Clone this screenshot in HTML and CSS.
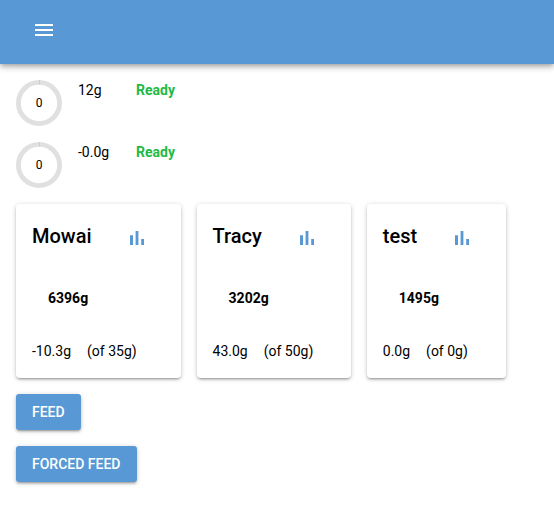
FILE: index.html
```html
<!DOCTYPE html>
<html lang="en">
<head>
<meta charset="utf-8">
<meta name="viewport" content="width=device-width, initial-scale=1">
<title>Feeder</title>
<link rel="stylesheet" href="styles.css">
</head>
<body>
<header class="toolbar">
  <button class="menu-button" type="button" aria-label="Menu">
    <svg class="icon" viewBox="0 0 24 24"><path d="M3 18h18v-2H3v2zm0-5h18v-2H3v2zm0-7v2h18V6H3z"/></svg>
  </button>
</header>
<main class="page">
  <section class="scale">
    <svg class="gauge" viewBox="0 0 46 46"><circle class="gauge-track" cx="23" cy="23" r="20.6"/><path class="gauge-tick" d="M23.5 0v4.5"/><text class="gauge-value" x="23" y="27">0</text></svg>
    <span class="scale-weight">12g</span>
    <strong class="scale-status">Ready</strong>
  </section>
  <section class="scale">
    <svg class="gauge" viewBox="0 0 46 46"><circle class="gauge-track" cx="23" cy="23" r="20.6"/><path class="gauge-tick" d="M23.5 0v4.5"/><text class="gauge-value" x="23" y="27">0</text></svg>
    <span class="scale-weight">-0.0g</span>
    <strong class="scale-status">Ready</strong>
  </section>
  <section class="cards">
    <article class="card">
      <div class="card-head">
        <h2 class="card-title">Mowai</h2>
        <button class="chart-button" type="button" aria-label="Chart for Mowai"><svg class="icon" viewBox="0 0 24 24"><path d="M5 9.2h3V19H5zM10.6 5h2.8v14h-2.8zm5.6 8H19v6h-2.8z"/></svg></button>
      </div>
      <strong class="card-weight">6396g</strong>
      <div class="card-foot"><span>-10.3g</span><span>(of 35g)</span></div>
    </article>
    <article class="card">
      <div class="card-head">
        <h2 class="card-title">Tracy</h2>
        <button class="chart-button" type="button" aria-label="Chart for Tracy"><svg class="icon" viewBox="0 0 24 24"><path d="M5 9.2h3V19H5zM10.6 5h2.8v14h-2.8zm5.6 8H19v6h-2.8z"/></svg></button>
      </div>
      <strong class="card-weight">3202g</strong>
      <div class="card-foot"><span>43.0g</span><span>(of 50g)</span></div>
    </article>
    <article class="card">
      <div class="card-head">
        <h2 class="card-title">test</h2>
        <button class="chart-button" type="button" aria-label="Chart for test"><svg class="icon" viewBox="0 0 24 24"><path d="M5 9.2h3V19H5zM10.6 5h2.8v14h-2.8zm5.6 8H19v6h-2.8z"/></svg></button>
      </div>
      <strong class="card-weight">1495g</strong>
      <div class="card-foot"><span>0.0g</span><span>(of 0g)</span></div>
    </article>
  </section>
  <button class="action" type="button">FEED</button>
  <button class="action" type="button">FORCED FEED</button>
</main>
</body>
</html>
```

FILE: styles.css
```css
* {
  box-sizing: border-box;
}

body {
  margin: 0;
  background: #fff;
  color: #000;
  font: 14px/21px Roboto, sans-serif;
}

button {
  border: 0;
  background: none;
  color: inherit;
  font: inherit;
  cursor: pointer;
}

.icon {
  display: block;
  width: 24px;
  height: 24px;
  fill: currentColor;
}

.toolbar {
  height: 64px;
  padding: 6px 20px;
  background: #5898d4;
  color: #fff;
  box-shadow: 0 2px 4px -1px rgba(0, 0, 0, 0.2), 0 4px 5px rgba(0, 0, 0, 0.14), 0 1px 10px rgba(0, 0, 0, 0.12);
}

.menu-button {
  padding: 12px;
}

.page {
  display: flex;
  flex-direction: column;
  align-items: flex-start;
  gap: 16px;
  padding: 16px;
}

.scale {
  display: flex;
  gap: 16px;
}

.gauge {
  width: 46px;
  height: 46px;
}

.gauge-track {
  fill: none;
  stroke: #e0e0e0;
  stroke-width: 4.8;
}

.gauge-tick {
  stroke: #dcc4e0;
  stroke-width: 1;
}

.gauge-value {
  font-size: 12px;
  text-anchor: middle;
}

.scale-weight {
  min-width: 42px;
}

.scale-status {
  color: #21ba45;
}

.cards {
  display: flex;
  flex-wrap: wrap;
  gap: 16px;
}

.card {
  display: flex;
  flex-direction: column;
  gap: 32px;
  padding: 16px;
  border-radius: 4px;
  box-shadow: 0 1px 5px rgba(0, 0, 0, 0.2), 0 2px 2px rgba(0, 0, 0, 0.14), 0 3px 1px -2px rgba(0, 0, 0, 0.12);
}

.card-head {
  display: flex;
  gap: 17px;
}

.card-title {
  margin: 0;
  font-size: 20px;
  font-weight: 500;
  line-height: 32px;
}

.chart-button {
  padding: 6px 16px;
  color: #5898d4;
}

.card-weight {
  padding: 0 16px;
}

.card-foot {
  display: flex;
  gap: 16px;
}

.action {
  padding: 8px 16px;
  border-radius: 3px;
  background: #5898d4;
  color: #fff;
  font-weight: 500;
  line-height: 20px;
  box-shadow: 0 1px 5px rgba(0, 0, 0, 0.2), 0 2px 2px rgba(0, 0, 0, 0.14), 0 3px 1px -2px rgba(0, 0, 0, 0.12);
}
```
